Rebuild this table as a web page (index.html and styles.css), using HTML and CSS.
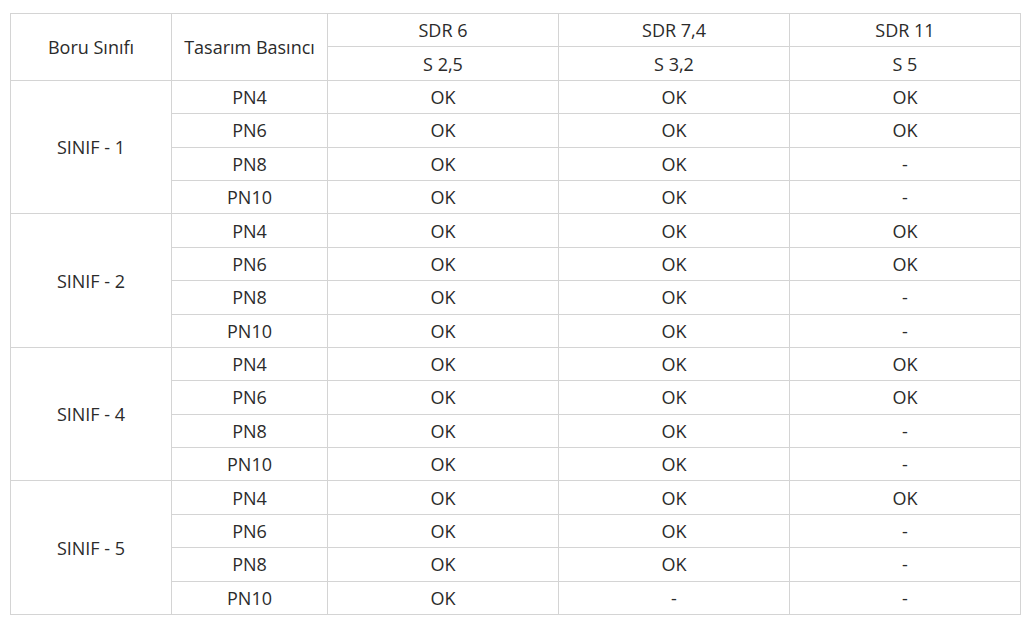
FILE: index.html
```html
<!DOCTYPE html>
<html lang="tr">
<head>
<meta charset="utf-8">
<link rel="stylesheet" href="styles.css">
</head>
<body>
<div class="wrap">
<table class="spec">
<colgroup><col class="c1"><col class="c2"><col class="c3"><col class="c3"><col class="c3"></colgroup>
<tr><td rowspan="2">Boru Sınıfı</td><td rowspan="2">Tasarım Basıncı</td><td>SDR 6</td><td>SDR 7,4</td><td>SDR 11</td></tr>
<tr><td>S 2,5</td><td>S 3,2</td><td>S 5</td></tr>
<tr><td rowspan="4">SINIF - 1</td><td>PN4</td><td>OK</td><td>OK</td><td>OK</td></tr>
<tr><td>PN6</td><td>OK</td><td>OK</td><td>OK</td></tr>
<tr><td>PN8</td><td>OK</td><td>OK</td><td>-</td></tr>
<tr><td>PN10</td><td>OK</td><td>OK</td><td>-</td></tr>
<tr><td rowspan="4">SINIF - 2</td><td>PN4</td><td>OK</td><td>OK</td><td>OK</td></tr>
<tr><td>PN6</td><td>OK</td><td>OK</td><td>OK</td></tr>
<tr><td>PN8</td><td>OK</td><td>OK</td><td>-</td></tr>
<tr><td>PN10</td><td>OK</td><td>OK</td><td>-</td></tr>
<tr><td rowspan="4">SINIF - 4</td><td>PN4</td><td>OK</td><td>OK</td><td>OK</td></tr>
<tr><td>PN6</td><td>OK</td><td>OK</td><td>OK</td></tr>
<tr><td>PN8</td><td>OK</td><td>OK</td><td>-</td></tr>
<tr><td>PN10</td><td>OK</td><td>OK</td><td>-</td></tr>
<tr><td rowspan="4">SINIF - 5</td><td>PN4</td><td>OK</td><td>OK</td><td>OK</td></tr>
<tr><td>PN6</td><td>OK</td><td>OK</td><td>-</td></tr>
<tr><td>PN8</td><td>OK</td><td>OK</td><td>-</td></tr>
<tr><td>PN10</td><td>OK</td><td>-</td><td>-</td></tr>
</table>
</div>
</body>
</html>
```
FILE: styles.css
```css
html, body {
  margin: 0;
  padding: 0;
  background: #fff;
}
.wrap {
  padding: 13px 0 0 10px;
}
.spec {
  border-collapse: collapse;
  table-layout: fixed;
  width: 1010px;
  font-family: "Open Sans", "Noto Sans", sans-serif;
  font-size: 18px;
  color: #2b2b2b;
}
.c1 { width: 161px; }
.c2 { width: 156px; }
.c3 { width: 231px; }
.spec tr {
  height: 33.4px;
}
.spec td {
  border: 1px solid #d4d4d4;
  text-align: center;
  vertical-align: middle;
  padding: 0 4px;
  line-height: 22px;
}
```
